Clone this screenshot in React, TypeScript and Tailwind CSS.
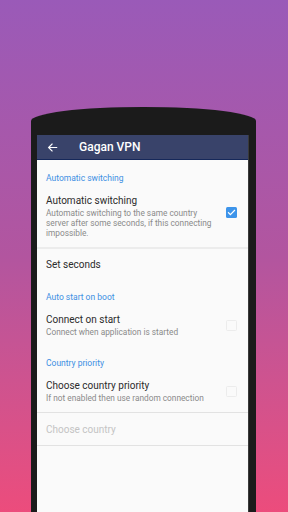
import React from "react";

function Check({ on }: { on?: boolean }) {
  if (on) {
    return (
      <div className="w-[11px] h-[11px] rounded-[1.5px] bg-[#3d94ea] flex items-center justify-center">
        <svg width="9" height="9" viewBox="0 0 24 24" fill="none" stroke="#fff" strokeWidth="3.2" strokeLinecap="square">
          <path d="M4 12.5l5 5L20 6.5" />
        </svg>
      </div>
    );
  }
  return <div className="w-[11px] h-[11px] rounded-[1.5px] border border-[#ececec]" />;
}

function Header({ children }: { children: React.ReactNode }) {
  return (
    <div className="pl-[9px] pt-[12px] pb-[10px] text-[8.5px] leading-[12px] text-[#3d8fe3]">{children}</div>
  );
}

export default function App() {
  return (
    <div
      className="w-[288px] h-[512px] overflow-hidden bg-gradient-to-b from-[#9a5ab8] via-[#b2559f] to-[#ec4c7c] pt-[107px] pl-[31px]"
      style={{ fontFamily: "Roboto, 'Noto Sans', sans-serif" }}
    >
      <div className="w-[225px] h-[420px] bg-[#1b1b1b] rounded-t-[112px_14px] pt-[28px] pl-[6px] pr-[7px]">
        <div className="w-[212px] h-[400px] bg-[#fafafa] border-r border-[#3a3a3a]">
          <div className="h-[25px] bg-[#39436a] border-b border-[#16285a] flex items-center">
            <svg className="ml-[10px]" width="11" height="11" viewBox="0 0 24 24" fill="none" stroke="#fff" strokeWidth="2.6" strokeLinecap="square">
              <path d="M21 12H4M11 4.5L3.5 12l7.5 7.5" />
            </svg>
            <div className="ml-[21px] text-white text-[12px] font-medium leading-none">Gagan VPN</div>
          </div>

          <Header>Automatic switching</Header>
          <div className="flex items-start pl-[9px] pr-[11px] pb-[9px]">
            <div className="flex-1">
              <div className="text-[10px] leading-[13px] text-[#2b2b2b]">Automatic switching</div>
              <div className="text-[8.3px] leading-[10px] text-[#8a8a8a] mt-[1px]">
                Automatic switching to the same country server after some seconds, if this connecting impossible.
              </div>
            </div>
            <div className="pt-[13px] pl-[10px]">
              <Check on />
            </div>
          </div>
          <div className="h-[2px] bg-[#ececec]" />
          <div className="pl-[9px] h-[30px] flex items-center text-[10px] text-[#2b2b2b]">Set seconds</div>

          <Header>Auto start on boot</Header>
          <div className="flex items-center pl-[9px] pr-[11px] pb-[8px]">
            <div className="flex-1">
              <div className="text-[10px] leading-[13px] text-[#2b2b2b]">Connect on start</div>
              <div className="text-[8.3px] leading-[10px] text-[#8a8a8a] mt-[1px]">Connect when application is started</div>
            </div>
            <Check />
          </div>

          <Header>Country priority</Header>
          <div className="flex items-center pl-[9px] pr-[11px] pb-[9px] border-b border-[#e2e2e2]">
            <div className="flex-1">
              <div className="text-[10px] leading-[13px] text-[#2b2b2b]">Choose country priority</div>
              <div className="text-[8.3px] leading-[10px] text-[#8a8a8a] mt-[1px]">If not enabled then use random connection</div>
            </div>
            <Check />
          </div>
          <div className="pl-[9px] h-[33px] flex items-center text-[10px] text-[#c4c4c4] border-b border-[#e2e2e2]">Choose country</div>
        </div>
      </div>
    </div>
  );
}
